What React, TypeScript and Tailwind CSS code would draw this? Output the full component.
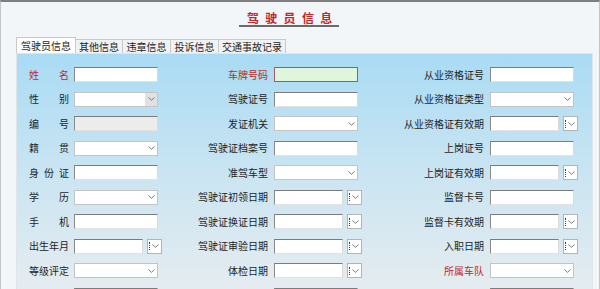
type Kind = "text" | "plate" | "disabled" | "select" | "selectShade" | "date";

type Field = { label: string; kind: Kind; red?: boolean };

const ROWS: Field[][] = [
  [
    { label: "姓名", kind: "text", red: true },
    { label: "车牌号码", kind: "plate", red: true },
    { label: "从业资格证号", kind: "text" },
  ],
  [
    { label: "性别", kind: "selectShade" },
    { label: "驾驶证号", kind: "text" },
    { label: "从业资格证类型", kind: "select" },
  ],
  [
    { label: "编号", kind: "disabled" },
    { label: "发证机关", kind: "select" },
    { label: "从业资格证有效期", kind: "date" },
  ],
  [
    { label: "籍贯", kind: "select" },
    { label: "驾驶证档案号", kind: "text" },
    { label: "上岗证号", kind: "text" },
  ],
  [
    { label: "身份证", kind: "text" },
    { label: "准驾车型", kind: "select" },
    { label: "上岗证有效期", kind: "date" },
  ],
  [
    { label: "学历", kind: "select" },
    { label: "驾驶证初领日期", kind: "date" },
    { label: "监督卡号", kind: "text" },
  ],
  [
    { label: "手机", kind: "text" },
    { label: "驾驶证换证日期", kind: "date" },
    { label: "监督卡有效期", kind: "date" },
  ],
  [
    { label: "出生年月", kind: "date" },
    { label: "驾驶证审验日期", kind: "date" },
    { label: "入职日期", kind: "date" },
  ],
  [
    { label: "等级评定", kind: "select" },
    { label: "体检日期", kind: "date" },
    { label: "所属车队", kind: "select", red: true },
  ],
  [
    { label: "", kind: "text" },
    { label: "", kind: "text" },
    { label: "", kind: "text" },
  ],
];

const TABS = [
  { label: "驾驶员信息", w: "w-[60px]", active: true },
  { label: "其他信息", w: "w-[47px]" },
  { label: "违章信息", w: "w-[48px]" },
  { label: "投诉信息", w: "w-[48px]" },
  { label: "交通事故记录", w: "w-[67px]" },
];

function Chevron() {
  return (
    <svg width="7" height="4" viewBox="0 0 7 4" className="shrink-0">
      <path d="M0.5 0.5 L3.5 3.3 L6.5 0.5" fill="none" stroke="#6b6b6b" strokeWidth="0.9" />
    </svg>
  );
}

function TextBox({ w = "w-[84px]", tone = "plain" }: { w?: string; tone?: "plain" | "plate" | "disabled" }) {
  if (tone === "plate") {
    return <div className={`${w} h-[15px] bg-[#dff5dc] border border-[#a65a5a]`} />;
  }
  return (
    <div
      className={`${w} h-[15px] border border-t-[#7c7c7c] border-l-[#8a8a8a] border-r-[#dadada] border-b-[#e2e2e2] ${
        tone === "disabled" ? "bg-[#ececec]" : "bg-white"
      }`}
    />
  );
}

function SelectBox({ shaded }: { shaded?: boolean }) {
  return (
    <div className="w-[84px] h-[15px] bg-white border border-[#c4c4c4] flex justify-end">
      <div className={`w-[12px] h-full flex items-center justify-center ${shaded ? "bg-[#e1e1e1]" : ""}`}>
        <Chevron />
      </div>
    </div>
  );
}

function DateBox() {
  return (
    <div className="flex items-center gap-[4px]">
      <TextBox w="w-[69px]" />
      <div className="w-[15px] h-[15px] bg-white border border-[#b4b4b4] flex items-center gap-[2px] pl-[1px]">
        <div className="h-[8px] border-l border-dotted border-[#444]" />
        <Chevron />
      </div>
    </div>
  );
}

function Control({ kind }: { kind: Kind }) {
  switch (kind) {
    case "plate":
      return <TextBox tone="plate" />;
    case "disabled":
      return <TextBox tone="disabled" />;
    case "select":
      return <SelectBox />;
    case "selectShade":
      return <SelectBox shaded />;
    case "date":
      return <DateBox />;
    default:
      return <TextBox />;
  }
}

export default function App() {
  return (
    <div
      className="w-[600px] h-[289px] overflow-hidden bg-[#f3f6f8] border-t-2 border-t-[#7e7e7e] border-x border-x-[#c4c4c4] flex flex-col"
      style={{ fontFamily: '"Noto Sans CJK SC", "Noto Sans", sans-serif' }}
    >
      {/* Title */}
      <div className="mt-[10px] ml-[238px] w-[100px] pl-[8px] pb-[1px] border-b-2 border-[#6a6a6a] text-[12px] leading-[12px] font-bold tracking-[6.3px] text-[#c3262b] whitespace-nowrap">
        驾驶员信息
      </div>

      {/* Tabs */}
      <div className="mt-[10px] ml-[15px] flex items-end h-[16px]">
        {TABS.map(t => (
          <div
            key={t.label}
            className={`${t.w} text-center text-[10px] leading-none text-[#1e1e1e] border-t border-r border-[#c9c9c9] flex items-center justify-center ${
              t.active ? "h-[16px] bg-white border-l" : "h-[14px] bg-[#f1f2f3]"
            }`}
          >
            {t.label}
          </div>
        ))}
      </div>

      {/* Panel */}
      <div className="ml-[15px] mr-[6px] flex-1 border border-[#dfe6ea] bg-linear-to-b from-[#a9dbf4] via-[#cbe5f2] to-[#e8edf0] pt-[13px] pl-[12px] flex flex-col gap-[9.5px]">
        {ROWS.map((row, i) => (
          <div key={i} className="flex items-center h-[15px] shrink-0">
            {/* col 1 */}
            <div className="w-[152px] flex items-center gap-[5px] shrink-0">
              <div
                className={`w-[40px] text-[10px] leading-none [text-align-last:justify] whitespace-nowrap ${
                  row[0].red ? "text-[#c3262b]" : "text-[#1e1e1e]"
                }`}
              >
                {row[0].label}
              </div>
              <Control kind={row[0].kind} />
            </div>
            {/* col 2 */}
            <div className="w-[220px] flex items-center gap-[6px] shrink-0">
              <div
                className={`w-[87px] text-right text-[10px] leading-none whitespace-nowrap ${
                  row[1].red ? "text-[#c3262b]" : "text-[#1e1e1e]"
                }`}
              >
                {row[1].label}
              </div>
              <Control kind={row[1].kind} />
            </div>
            {/* col 3 */}
            <div className="flex items-center gap-[6px] shrink-0">
              <div
                className={`w-[83px] text-right text-[10px] leading-none whitespace-nowrap ${
                  row[2].red ? "text-[#c3262b]" : "text-[#1e1e1e]"
                }`}
              >
                {row[2].label}
              </div>
              <Control kind={row[2].kind} />
            </div>
          </div>
        ))}
      </div>
    </div>
  );
}
